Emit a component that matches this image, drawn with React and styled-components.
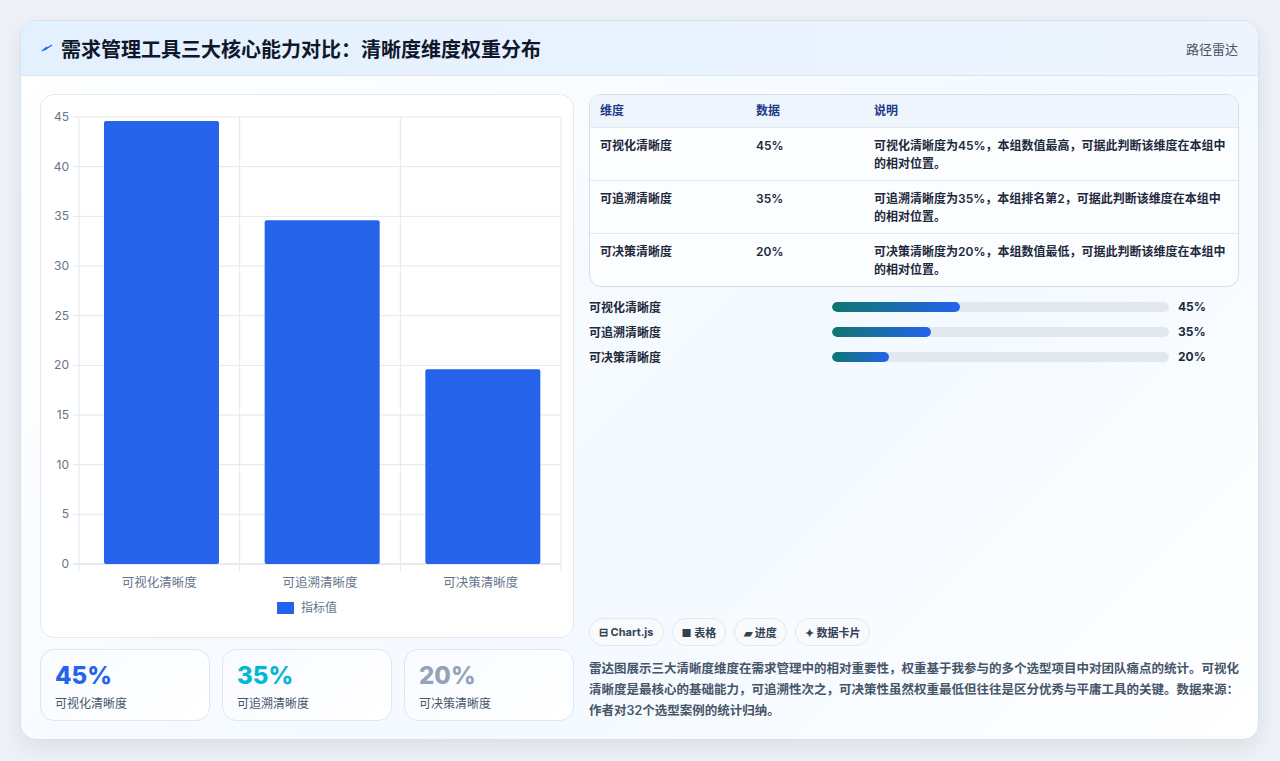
import React from 'react'
import styled, { createGlobalStyle } from 'styled-components'

const Global = createGlobalStyle`
  body { margin: 0; background: #eef1f5; font-family: Inter, "Noto Sans CJK SC", sans-serif; }
`

const Page = styled.div`
  padding: 20px 21px 21px 20px;
`

const Card = styled.div`
  border: 1px solid #cfe3f3;
  border-radius: 16px;
  background: linear-gradient(135deg, #ffffff 0%, #f3f9ff 60%, #ffffff 100%);
  box-shadow: 0 8px 24px rgba(15, 23, 42, 0.08);
  overflow: hidden;
`

const Header = styled.div`
  height: 54px;
  display: flex;
  align-items: center;
  justify-content: space-between;
  padding: 0 20px;
  background: linear-gradient(90deg, #e3f0fd, #edf4fe);
  border-bottom: 1px solid #d6e6f5;
`

const Title = styled.h1`
  margin: 0;
  font-size: 20px;
  font-weight: 700;
  color: #0f172a;
  display: flex;
  align-items: center;
  gap: 8px;
`

const Tag = styled.span`
  font-size: 13px;
  color: #475569;
`

const Body = styled.div`
  display: grid;
  grid-template-columns: 534px 1fr;
  gap: 15px;
  padding: 18px 19px 18px 19px;
`

const Col = styled.div`
  display: flex;
  flex-direction: column;
`

const ChartBox = styled.div`
  height: 542px;
  border: 1px solid #e2e8f0;
  border-radius: 14px;
  background: #fff;
`

const Stats = styled.div`
  display: grid;
  grid-template-columns: repeat(3, 1fr);
  gap: 12px;
  margin-top: 11px;
`

const Stat = styled.div`
  height: 72px;
  box-sizing: border-box;
  border: 1px solid #dbe7f5;
  border-radius: 14px;
  background: linear-gradient(135deg, #f8fbff, #ffffff);
  padding: 12px 14px;
`

const StatValue = styled.div`
  font-size: 24px;
  font-weight: 800;
  line-height: 28px;
  color: ${p => p.color};
`

const StatLabel = styled.div`
  font-size: 12px;
  color: #475569;
  margin-top: 4px;
`

const Table = styled.div`
  border: 1px solid #d5dfea;
  border-radius: 12px;
  overflow: hidden;
  background: #fbfdff;
`

const Row = styled.div`
  display: grid;
  grid-template-columns: 156px 118px 1fr;
  padding: 0 10px;
  min-height: ${p => (p.head ? 32 : 53)}px;
  align-items: ${p => (p.head ? 'center' : 'start')};
  box-sizing: border-box;
  padding-top: ${p => (p.head ? 0 : 9)}px;
  background: ${p => (p.head ? '#eef5fd' : 'transparent')};
  border-top: ${p => (p.first ? 'none' : '1px solid #e2e8f0')};
  font-size: 12px;
  line-height: 18px;
  font-weight: ${p => (p.head ? 700 : 600)};
  color: ${p => (p.head ? '#1e3a8a' : '#1e293b')};
`

const Bars = styled.div`
  display: flex;
  flex-direction: column;
  gap: 6px;
  margin-top: 10px;
`

const BarRow = styled.div`
  display: grid;
  grid-template-columns: 243px 337px 1fr;
  align-items: center;
  gap: 0;
  font-size: 12px;
  font-weight: 600;
  color: #1e293b;
  height: 19px;
`

const Track = styled.div`
  height: 10px;
  background: #e2e8f0;
  border-radius: 5px;
  overflow: hidden;
`

const Fill = styled.div`
  height: 100%;
  border-radius: 5px;
  background: linear-gradient(90deg, #0f766e, #2563eb);
`

const Pct = styled.span`
  padding-left: 9px;
  font-weight: 700;
`

const Spacer = styled.div`
  flex: 1;
`

const Chips = styled.div`
  display: flex;
  gap: 8px;
`

const Chip = styled.span`
  height: 28px;
  box-sizing: border-box;
  padding: 0 9px;
  border: 1px solid #e2e8f0;
  border-radius: 14px;
  background: #f8fafc;
  display: inline-flex;
  align-items: center;
  gap: 4px;
  font-size: 11px;
  font-weight: 700;
  color: #334155;
`

const Note = styled.p`
  margin: 12px 0 0;
  font-size: 12.5px;
  line-height: 21px;
  font-weight: 600;
  color: #475569;
`

const cats = ['可视化清晰度', '可追溯清晰度', '可决策清晰度']
const vals = [45, 35, 20]

function Chart() {
  const x0 = 38, x1 = 520, yTop = 22, yBot = 469
  const sy = v => yBot - (v / 45) * (yBot - yTop)
  const w = (x1 - x0) / 3
  return (
    <svg width="532" height="540" viewBox="0 0 532 540">
      {Array.from({ length: 10 }, (_, i) => i * 5).map(v => (
        <g key={v}>
          <line x1={x0 - 6} x2={x1} y1={sy(v)} y2={sy(v)} stroke={v === 0 ? '#cbd5e1' : '#e5e7eb'} />
          <text x={x0 - 10} y={sy(v) + 4} textAnchor="end" fontSize="12" fill="#64748b" fontFamily="Inter, sans-serif">{v}</text>
        </g>
      ))}
      {[0, 1, 2, 3].map(i => (
        <line key={i} x1={x0 + i * w} x2={x0 + i * w} y1={yTop} y2={yBot + 8} stroke="#e5e7eb" />
      ))}
      {vals.map((v, i) => (
        <g key={i}>
          <rect x={x0 + i * w + 25} y={sy(v - 0.4)} width={115} height={yBot - sy(v - 0.4)} fill="#2563eb" rx="2" />
          <text x={x0 + i * w + w / 2} y={yBot + 23} textAnchor="middle" fontSize="12.5" fill="#64748b" fontFamily="'Noto Sans CJK SC', sans-serif">{cats[i]}</text>
        </g>
      ))}
      <rect x="236" y="507" width="17" height="12" fill="#2563eb" />
      <text x="260" y="517" fontSize="12" fill="#64748b" fontFamily="'Noto Sans CJK SC', sans-serif">指标值</text>
    </svg>
  )
}

const rows = [
  ['可视化清晰度', '45%', '可视化清晰度为45%，本组数值最高，可据此判断该维度在本组中的相对位置。'],
  ['可追溯清晰度', '35%', '可追溯清晰度为35%，本组排名第2，可据此判断该维度在本组中的相对位置。'],
  ['可决策清晰度', '20%', '可决策清晰度为20%，本组数值最低，可据此判断该维度在本组中的相对位置。'],
]

export default function App() {
  return (
    <Page>
      <Global />
      <Card>
        <Header>
          <Title>
            <svg width="12" height="12" viewBox="0 0 12 12"><path d="M1 9 L6 5 L5 7 L11 3" stroke="#2563eb" strokeWidth="1.4" fill="none" /></svg>
            需求管理工具三大核心能力对比：清晰度维度权重分布
          </Title>
          <Tag>路径雷达</Tag>
        </Header>
        <Body>
          <Col>
            <ChartBox><Chart /></ChartBox>
            <Stats>
              <Stat><StatValue color="#2563eb">45%</StatValue><StatLabel>可视化清晰度</StatLabel></Stat>
              <Stat><StatValue color="#06b6d4">35%</StatValue><StatLabel>可追溯清晰度</StatLabel></Stat>
              <Stat><StatValue color="#94a3b8">20%</StatValue><StatLabel>可决策清晰度</StatLabel></Stat>
            </Stats>
          </Col>
          <Col>
            <Table>
              <Row head first><span>维度</span><span>数据</span><span>说明</span></Row>
              {rows.map(r => (
                <Row key={r[0]}><span>{r[0]}</span><span>{r[1]}</span><span>{r[2]}</span></Row>
              ))}
            </Table>
            <Bars>
              {[['可视化清晰度', 45, 38], ['可追溯清晰度', 35, 29.5], ['可决策清晰度', 20, 17]].map(([n, v, w]) => (
                <BarRow key={n}>
                  <span>{n}</span>
                  <Track><Fill style={{ width: w + '%' }} /></Track>
                  <Pct>{v}%</Pct>
                </BarRow>
              ))}
            </Bars>
            <Spacer />
            <Chips>
              <Chip>⊟ Chart.js</Chip>
              <Chip>■ 表格</Chip>
              <Chip>▰ 进度</Chip>
              <Chip>✦ 数据卡片</Chip>
            </Chips>
            <Note>雷达图展示三大清晰度维度在需求管理中的相对重要性，权重基于我参与的多个选型项目中对团队痛点的统计。可视化清晰度是最核心的基础能力，可追溯性次之，可决策性虽然权重最低但往往是区分优秀与平庸工具的关键。数据来源：作者对32个选型案例的统计归纳。</Note>
          </Col>
        </Body>
      </Card>
    </Page>
  )
}
